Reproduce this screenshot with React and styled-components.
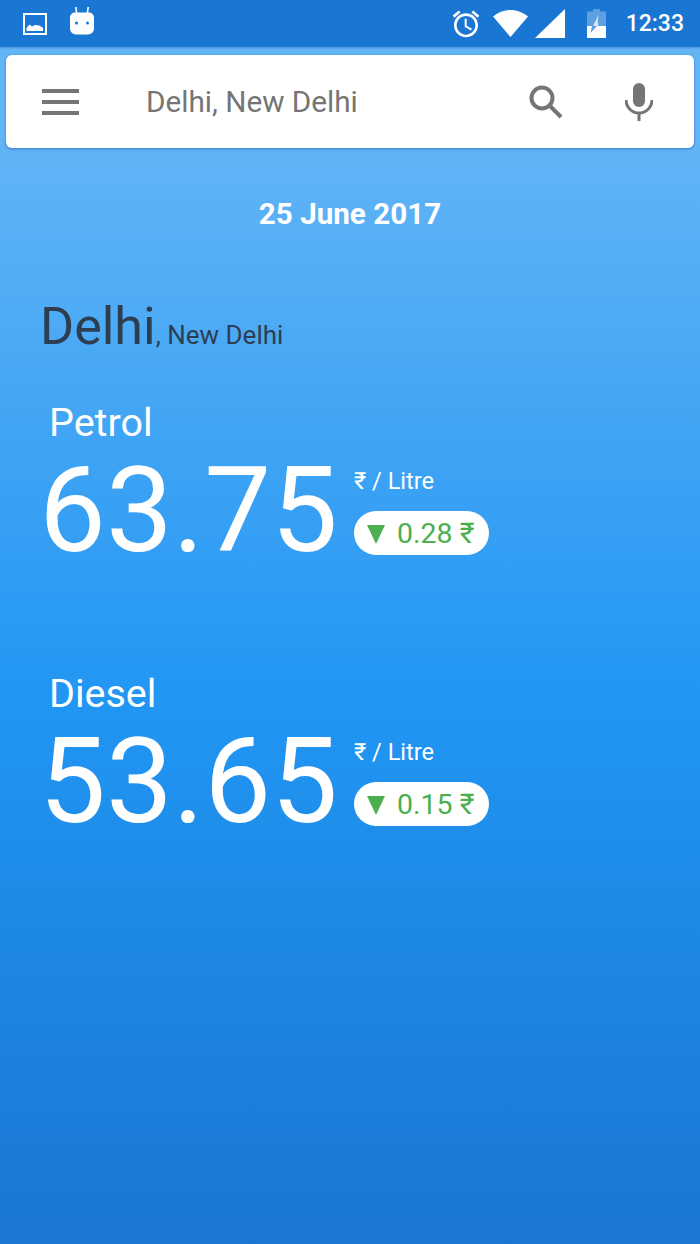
import React from "react";
import styled, { createGlobalStyle } from "styled-components";

const GlobalStyle = createGlobalStyle`
  html, body { margin: 0; padding: 0; }
  body { font-family: Roboto, "Liberation Sans", sans-serif; }
`;

const Screen = styled.div`
  width: 700px;
  height: 1244px;
  overflow: hidden;
  display: flex;
  flex-direction: column;
  background: linear-gradient(180deg, #64b5f6 130px, #2196f3 700px, #1976d2 1244px);
`;

const StatusBar = styled.div`
  height: 47px;
  flex: none;
  display: flex;
  align-items: center;
  justify-content: space-between;
  padding: 0 16px 0 23px;
  background: #1976d2;
  box-shadow: 0 1px 2px rgba(13, 71, 161, 0.35);
  color: #fff;
`;

const StatusGroup = styled.div`
  display: flex;
  align-items: center;
`;

const Clock = styled.span`
  margin-left: 20px;
  font-size: 23px;
  font-weight: 500;
`;

const SearchCard = styled.div`
  height: 93px;
  margin: 8px 6px 0;
  display: flex;
  align-items: center;
  background: #fff;
  border-radius: 6px;
  box-shadow: 0 1px 3px rgba(13, 71, 161, 0.5);
  color: #757575;
`;

const SearchText = styled.span`
  flex: 1;
  margin-left: 67px;
  font-size: 29.7px;
`;

const IconSlot = styled.span`
  display: flex;
  margin: ${(p) => p.$margin};
`;

const DateLine = styled.div`
  margin-top: 48px;
  text-align: center;
  color: #fff;
  font-size: 29.6px;
  font-weight: 700;
  line-height: 36px;
`;

const CityLine = styled.div`
  margin: 65px 0 0 40px;
  color: #2c3e50;
  font-size: 26px;
  line-height: 60px;
`;

const CityName = styled.span`
  font-size: 52px;
`;

const Fuel = styled.section`
  margin: ${(p) => p.$top}px 0 0 0;
  color: #fff;
`;

const FuelName = styled.div`
  margin-left: 49px;
  font-size: 39.5px;
  line-height: 44px;
`;

const PriceRow = styled.div`
  display: flex;
  align-items: flex-start;
  margin: 6px 0 0 39px;
`;

const Price = styled.div`
  font-size: 119px;
  line-height: 120px;
  width: 315px;
`;

const PriceSide = styled.div`
  margin-top: 15px;
`;

const Unit = styled.div`
  font-size: 23.600px;
  line-height: 30px;
`;

const Change = styled.div`
  width: 122px;
  height: 44px;
  margin-top: 15px;
  padding-left: 13px;
  display: flex;
  align-items: center;
  gap: 12px;
  background: #fff;
  border-radius: 22px;
  color: #4caf50;
  font-size: 28.500px;
`;

const Drop = styled.svg`
  width: 18px;
  height: 19px;
  margin-top: 3px;
  fill: #4caf50;
`;

const AlarmIcon = () => (
  <svg width="32" height="32" viewBox="0 0 24 24" fill="#fff">
    <path d="M22 5.72l-4.6-3.86-1.29 1.53 4.6 3.86L22 5.72zM7.88 3.39L6.6 1.86 2 5.71l1.29 1.53 4.59-3.85zM12.5 8H11v6l4.75 2.85.75-1.23-4-2.37V8zM12 4c-4.97 0-9 4.03-9 9s4.03 9 9 9 9-4.03 9-9-4.03-9-9-9zm0 16c-3.87 0-7-3.13-7-7s3.13-7 7-7 7 3.13 7 7-3.13 7-7 7z" />
  </svg>
);

const FuelBlock = ({ top, name, price, change }) => (
  <Fuel $top={top}>
    <FuelName>{name}</FuelName>
    <PriceRow>
      <Price>{price}</Price>
      <PriceSide>
        <Unit>₹ / Litre</Unit>
        <Change>
          <Drop viewBox="0 0 18 19"><path d="M0 0h18L9 19z" /></Drop>
          <span>{change} ₹</span>
        </Change>
      </PriceSide>
    </PriceRow>
  </Fuel>
);

const App = () => (
  <>
    <GlobalStyle />
    <Screen>
      <StatusBar>
        <StatusGroup>
          <svg width="24" height="24" viewBox="0 0 24 24">
            <path d="M1 2h22v20H1z" fill="none" stroke="#fff" strokeWidth="2" />
            <path d="M3.500 19v-3l3-3.500 2.500 2 3-1.500 4 .5 3 1.500 1 1V19z" fill="#fff" />
          </svg>
          <IconSlot $margin="-5px 0 0 23px">
            <svg width="24" height="28" viewBox="0 0 24 28" fill="#fff">
              <path d="M5 0l1.600 0 .8 6H5.800zM19 0l-1.600 0-.8 6h1.600z" />
              <path d="M5 5.500h14a5 5 0 0 1 5 5v11a6 6 0 0 1-6 6H6a6 6 0 0 1-6-6v-11a5 5 0 0 1 5-5z" />
              <circle cx="6.500" cy="16" r="1.500" fill="#1976d2" />
              <circle cx="17.500" cy="16" r="1.500" fill="#1976d2" />
            </svg>
          </IconSlot>
        </StatusGroup>
        <StatusGroup>
          <AlarmIcon />
          <IconSlot $margin="0 0 0 11px">
            <svg width="35" height="27" viewBox="0 0 35 27" fill="#fff">
              <path d="M17.500 27L0 6.500C5 2.500 11 0 17.500 0S30 2.500 35 6.500z" />
            </svg>
          </IconSlot>
          <IconSlot $margin="0 0 0 7px">
            <svg width="30" height="29" viewBox="0 0 30 29" fill="#fff">
              <path d="M0 29L30 0v29z" />
            </svg>
          </IconSlot>
          <IconSlot $margin="0 0 0 22px">
            <svg width="19" height="29" viewBox="0 0 19 29">
              <path d="M6 0h7v2.500h6V29H0V2.500h6z" fill="#fff" opacity="0.3" />
              <path d="M0 17h5L3.500 24 10 17h9v12H0z" fill="#fff" />
              <path d="M11.500 6L6 17h4.500l1.500-2.500h-1.500z" fill="#fff" opacity="0.75" />
            </svg>
          </IconSlot>
          <Clock>12:33</Clock>
        </StatusGroup>
      </StatusBar>

      <SearchCard>
        <IconSlot $margin="0 0 0 36px">
          <svg width="37" height="26" viewBox="0 0 37 26" fill="#757575">
            <path d="M0 0h37v4H0zM0 11h37v4H0zM0 22h37v4H0z" />
          </svg>
        </IconSlot>
        <SearchText>Delhi, New Delhi</SearchText>
        <IconSlot $margin="0 0 0 0">
          <svg width="34" height="34" viewBox="0 0 34 34" fill="none" stroke="#757575" strokeWidth="4">
            <circle cx="13" cy="13" r="10.500" />
            <path d="M20.500 20.500L32 32" />
          </svg>
        </IconSlot>
        <IconSlot $margin="0 41px 0 62px">
          <svg width="28" height="38" viewBox="0 0 28 38" fill="#757575">
            <rect x="8" y="0" width="12" height="24" rx="6" />
            <path d="M1 17a13 13 0 0 0 26 0" fill="none" stroke="#757575" strokeWidth="3" />
            <rect x="12.500" y="29" width="3" height="9" />
          </svg>
        </IconSlot>
      </SearchCard>

      <DateLine>25 June 2017</DateLine>

      <CityLine>
        <CityName>Delhi</CityName>, New Delhi
      </CityLine>

      <FuelBlock top={36} name="Petrol" price="63.75" change="0.28" />
      <FuelBlock top={101} name="Diesel" price="53.65" change="0.15" />
    </Screen>
  </>
);

export default App;
